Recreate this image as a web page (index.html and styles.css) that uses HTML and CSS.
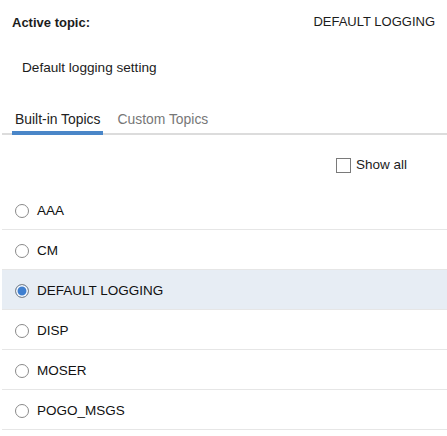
FILE: index.html
```html
<!doctype html>
<html lang="en">
<head>
  <meta charset="UTF-8">
  <meta name="viewport" content="width=device-width, initial-scale=1.0">
  <title>Logging topics</title>
  <link rel="stylesheet" href="styles.css">
</head>
<body>
  <div class="active-row">
    <span class="active-label">Active topic:</span>
    <span class="active-value">DEFAULT LOGGING</span>
  </div>
  <p class="description">Default logging setting</p>

  <div class="tabs">
    <span class="tab selected">Built-in Topics</span>
    <span class="tab">Custom Topics</span>
  </div>

  <label class="show-all">
    <span class="checkbox"></span>
    <span>Show all</span>
  </label>

  <ul class="topic-list">
    <li class="topic"><span class="radio"></span>AAA</li>
    <li class="topic"><span class="radio"></span>CM</li>
    <li class="topic current"><span class="radio checked"></span>DEFAULT LOGGING</li>
    <li class="topic"><span class="radio"></span>DISP</li>
    <li class="topic"><span class="radio"></span>MOSER</li>
    <li class="topic"><span class="radio"></span>POGO_MSGS</li>
  </ul>
</body>
</html>
```

FILE: styles.css
```css
body {
  margin: 0;
  font-family: "Liberation Sans", Arial, sans-serif;
  font-size: 13px;
  line-height: 16px;
  color: #1c1c1c;
  background: #fff;
}
.active-row {
  display: flex;
  justify-content: space-between;
  padding: 14px 12px 0 12px;
}
.active-label {
  font-weight: bold;
  margin-top: 1px;
}
.description {
  margin: 29px 0 0 22px;
  font-size: 13.6px;
}
.tabs {
  display: flex;
  gap: 11px;
  margin: 35px 0 0 2px;
  padding-left: 10px;
  border-bottom: 2px solid #dcdcdc;
  font-size: 13.9px;
}
.tab {
  padding: 0 3px 4px;
  border-bottom: 4px solid transparent;
  margin-bottom: -2px;
  color: #777;
}
.tab.selected {
  color: #222;
  border-bottom-color: #4a86c8;
}
.show-all {
  display: flex;
  align-items: center;
  justify-content: flex-end;
  gap: 5px;
  margin: 22px 40px 0 0;
  font-size: 13.5px;
}
.checkbox {
  width: 13px;
  height: 13px;
  border: 1px solid #7a7a7a;
  background: #fff;
}
.topic-list {
  list-style: none;
  margin: 17px 0 0 2px;
  padding: 0;
  font-size: 13.5px;
}
.topic {
  display: flex;
  align-items: center;
  gap: 8px;
  height: 40px;
  box-sizing: border-box;
  padding: 2px 0 0 13px;
  border-bottom: 1px solid #e6e6e6;
  color: #111;
}
.topic.current {
  background: #e7edf4;
}
.radio {
  width: 12px;
  height: 12px;
  border: 1px solid #8a8a8a;
  border-radius: 50%;
  background: #fff;
}
.radio.checked {
  background: #3f7fcf;
  box-shadow: inset 0 0 0 1.5px #fff;
}
```
